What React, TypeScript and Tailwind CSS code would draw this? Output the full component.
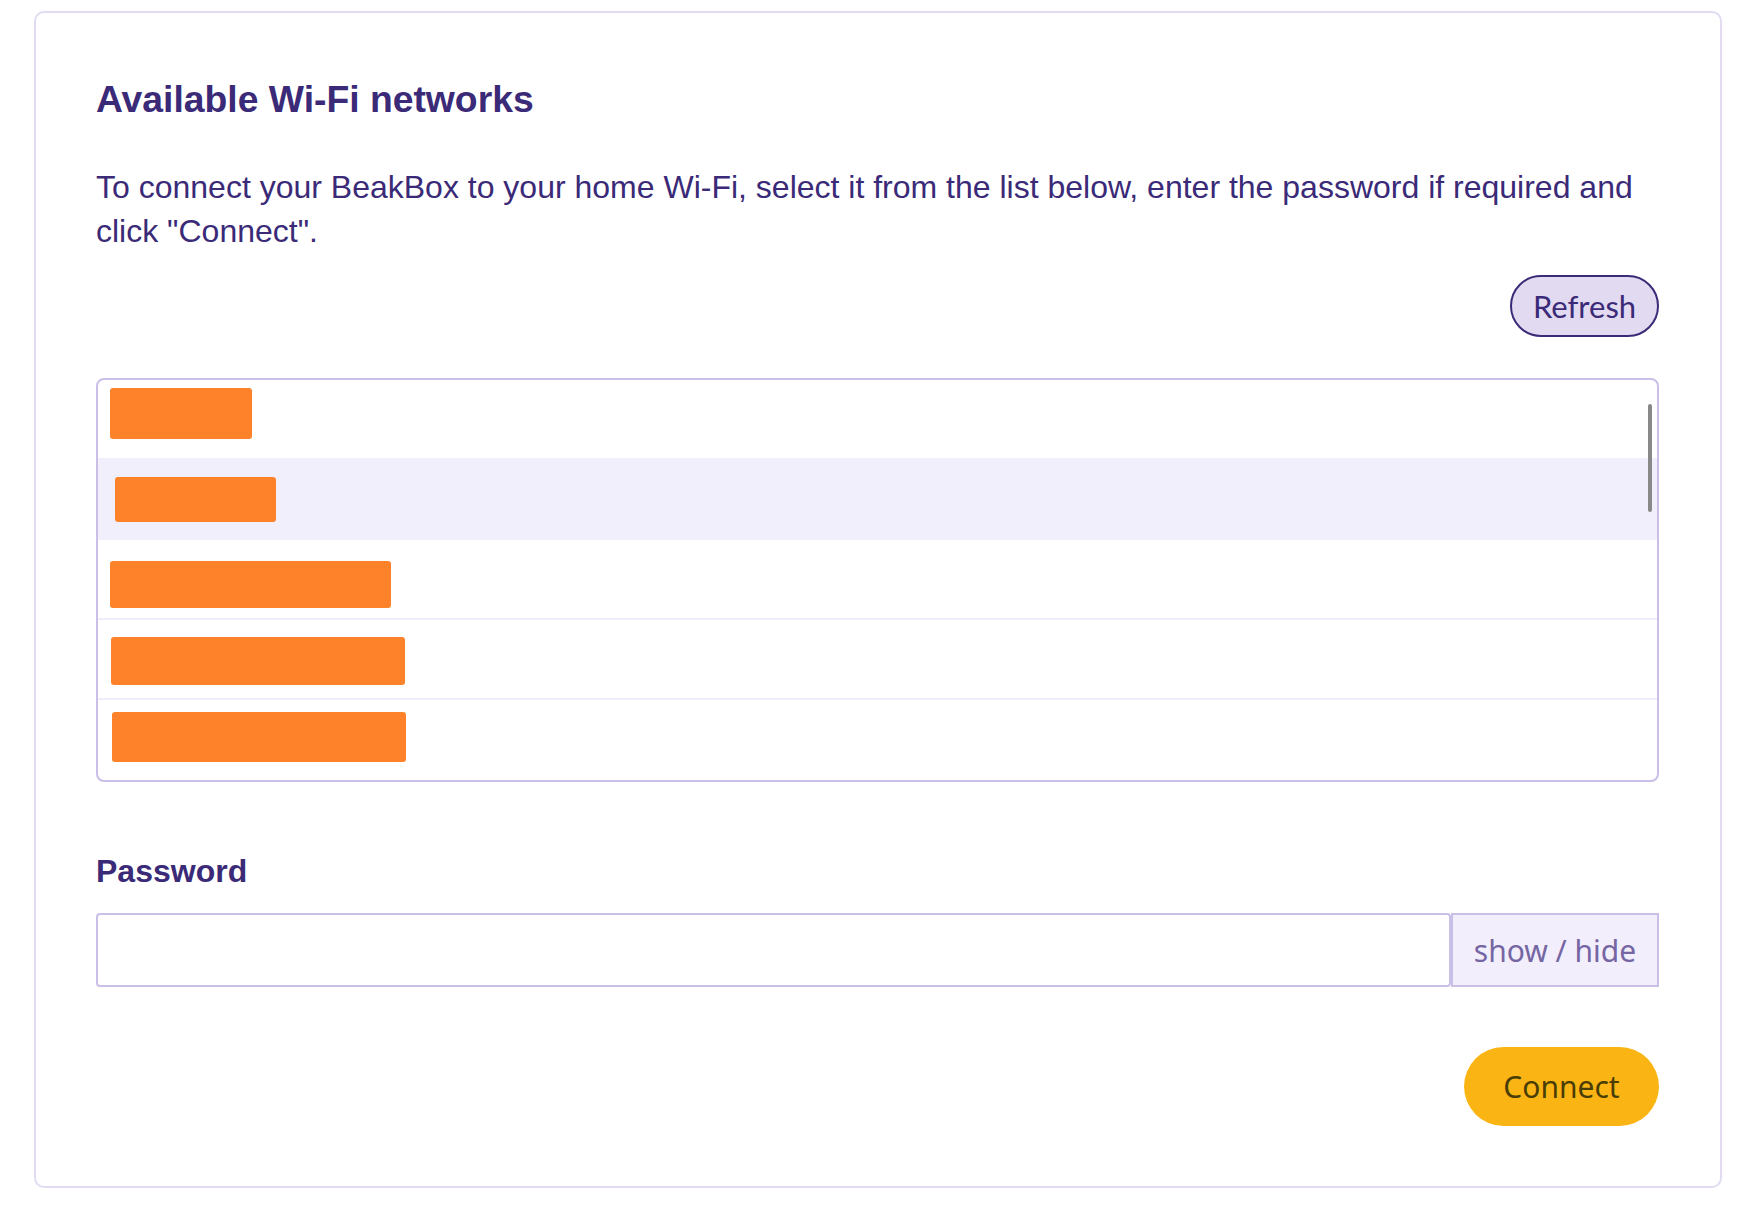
const networks = [
  { row: "h-[78px]", mark: "ml-[12px] mt-[8px] h-[51px] w-[142px]" },
  { row: "h-[82px] bg-[#f2effc]", mark: "ml-[17px] mt-[19px] h-[45px] w-[161px]" },
  { row: "h-[80px] border-b-2 border-[#f0ecfa]", mark: "ml-[12px] mt-[21px] h-[47px] w-[281px]" },
  { row: "h-[80px] border-b-2 border-[#f0ecfa]", mark: "ml-[13px] mt-[17px] h-[48px] w-[294px]" },
  { row: "h-[80px]", mark: "ml-[14px] mt-[12px] h-[50px] w-[294px]" },
];

const App = () => {
  return (
    <div className="min-h-screen bg-white pl-[34px] pt-[11px] font-['Liberation_Sans',Arial,sans-serif] text-[#3a2a77]">
      <div className="w-[1688px] rounded-[10px] border-2 border-[#e2dbf2] pl-[60px] pr-[61px] pb-[60px] pt-[64px]">
        <h2 className="text-[37.3px] font-bold leading-[44px]">Available Wi-Fi networks</h2>

        <p className="mt-[44px] text-[32px] leading-[44px]">
          To connect your BeakBox to your home Wi-Fi, select it from the list below, enter the password if
          required and click "Connect".
        </p>

        <div className="mt-[22px] flex justify-end">
          <button className="h-[62px] w-[149px] rounded-full border-2 border-[#3a2a77] bg-[#e2daf0] font-['Lato',sans-serif] text-[31px] text-[#3a2a77]">
            Refresh
          </button>
        </div>

        {/* network list, names are blanked out */}
        <div className="relative mt-[41px] overflow-hidden rounded-[8px] border-2 border-[#cabfe6]">
          {networks.map((n, index) => (
            <div key={index} className={"flex items-start " + n.row}>
              <div className={"rounded-[3px] bg-[#fe8229] " + n.mark} />
            </div>
          ))}
          <div className="absolute right-[5px] top-[24px] h-[108px] w-[4px] rounded-full bg-[#898989]" />
        </div>

        <label className="mt-[69px] block text-[32px] font-bold leading-[40px]">Password</label>
        <div className="mt-[22px] flex h-[74px]">
          <input type="password" className="min-w-0 flex-1 rounded-[4px] border-2 border-[#cabfe6] bg-white px-4 outline-none" />
          <button className="w-[208px] border-2 border-[#cabfe6] bg-[#f2eefc] font-['Noto_Sans',sans-serif] text-[30px] text-[#7566a3]">
            show / hide
          </button>
        </div>

        <div className="mt-[60px] flex justify-end">
          <button className="h-[79px] w-[195px] rounded-full bg-[#fab515] font-['Noto_Sans',sans-serif] text-[30px] text-[#4a3d05]">
            Connect
          </button>
        </div>
      </div>
    </div>
  );
};

export default App;
